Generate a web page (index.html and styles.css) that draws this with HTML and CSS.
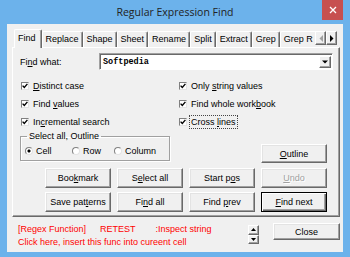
FILE: index.html
```html
<!DOCTYPE html>
<html>
<head>
  <meta charset="utf-8">
  <title>Regular Expression Find</title>
  <link rel="stylesheet" href="styles.css">
</head>
<body>
<div class="window">

  <div class="titlebar">
    <span></span>
    <span class="title">Regular Expression Find</span>
    <span class="close">
      <svg width="8" height="8" viewBox="0 0 8 8"><path d="M1 1L7 7M7 1L1 7" stroke="#fff" stroke-width="1.3"/></svg>
    </span>
  </div>

  <div class="client">

    <div class="tabstrip">
      <div class="tablist">
        <span class="tab active">Find</span>
        <span class="tab">Replace</span>
        <span class="tab">Shape</span>
        <span class="tab">Sheet</span>
        <span class="tab">Rename</span>
        <span class="tab">Split</span>
        <span class="tab">Extract</span>
        <span class="tab">Grep</span>
        <span class="tab last">Grep R</span>
      </div>
      <div class="tabscroll">
        <span class="scrollbtn off"><svg width="4" height="7" viewBox="0 0 4 7"><path d="M4 0L0.5 3.5L4 7Z" fill="#a0a0a0"/></svg></span>
        <span class="scrollbtn"><svg width="4" height="7" viewBox="0 0 4 7"><path d="M0 0L3.5 3.5L0 7Z" fill="#000"/></svg></span>
      </div>
    </div>

    <div class="panel">
      <div class="findrow">
        <span class="findlabel">Fi<u>n</u>d what:</span>
        <div class="combo">
          <span class="combotext">Softpedia</span>
          <span class="dropbtn"><svg width="6" height="4" viewBox="0 0 6 4"><path d="M0 0.5H6L3 3.5Z" fill="#000"/></svg></span>
        </div>
      </div>

      <div class="checks">
        <div class="check"><span class="box"><svg width="6" height="6" viewBox="0 0 6 6"><path d="M0.6 2.6L2.3 4.5L5.4 0.9" fill="none" stroke="#000" stroke-width="1.4"/></svg></span><span><u>D</u>istinct case</span></div>
        <div class="check"><span class="box"><svg width="6" height="6" viewBox="0 0 6 6"><path d="M0.6 2.6L2.3 4.5L5.4 0.9" fill="none" stroke="#000" stroke-width="1.4"/></svg></span><span>Only <u>s</u>tring values</span></div>
        <div class="check"><span class="box"><svg width="6" height="6" viewBox="0 0 6 6"><path d="M0.6 2.6L2.3 4.5L5.4 0.9" fill="none" stroke="#000" stroke-width="1.4"/></svg></span><span>Find <u>v</u>alues</span></div>
        <div class="check"><span class="box"><svg width="6" height="6" viewBox="0 0 6 6"><path d="M0.6 2.6L2.3 4.5L5.4 0.9" fill="none" stroke="#000" stroke-width="1.4"/></svg></span><span>Find whole work<u>b</u>ook</span></div>
        <div class="check"><span class="box"><svg width="6" height="6" viewBox="0 0 6 6"><path d="M0.6 2.6L2.3 4.5L5.4 0.9" fill="none" stroke="#000" stroke-width="1.4"/></svg></span><span>In<u>c</u>remental search</span></div>
        <div class="check"><span class="box"><svg width="6" height="6" viewBox="0 0 6 6"><path d="M0.6 2.6L2.3 4.5L5.4 0.9" fill="none" stroke="#000" stroke-width="1.4"/></svg></span><span class="focus">Cross <u>l</u>ines</span></div>
      </div>

      <div class="middle">
        <fieldset class="group">
          <legend>Select all, Outline</legend>
          <div class="radios">
            <span class="radio on"><span class="dot"></span>Cell</span>
            <span class="radio"><span class="dot"></span>Row</span>
            <span class="radio"><span class="dot"></span>Column</span>
          </div>
        </fieldset>
        <button class="btn outline"><u>O</u>utline</button>
      </div>

      <div class="btngrid">
        <button class="btn">Boo<u>k</u>mark</button>
        <button class="btn">S<u>e</u>lect all</button>
        <button class="btn">Start p<u>o</u>s</button>
        <button class="btn off"><u>U</u>ndo</button>
        <button class="btn">Save pat<u>t</u>erns</button>
        <button class="btn">Fi<u>n</u>d all</button>
        <button class="btn">Find <u>p</u>rev</button>
        <button class="btn default"><u>F</u>ind next</button>
      </div>
    </div>

    <div class="footer">
      <div class="hint">
        <div class="hintline"><span>[Regex Function]</span><span class="retest">RETEST</span><span class="inspect">:Inspect string</span></div>
        <div class="hintline">Click here, insert this func into cureent cell</div>
      </div>
      <div class="spin">
        <span class="spinbtn"><svg width="5" height="3" viewBox="0 0 5 3"><path d="M0 3H5L2.5 0Z" fill="#000"/></svg></span>
        <span class="spinbtn"><svg width="5" height="3" viewBox="0 0 5 3"><path d="M0 0H5L2.5 3Z" fill="#000"/></svg></span>
      </div>
      <button class="btn closebtn">Close</button>
    </div>

  </div>
</div>
</body>
</html>
```

FILE: styles.css
```css
* {
  box-sizing: border-box;
}

body {
  margin: 0;
  font-family: "Liberation Sans", Arial, sans-serif;
  font-size: 9px;
  color: #000;
}

u {
  text-decoration-thickness: 1px;
  text-underline-offset: 1px;
}

.window {
  width: 350px;
  height: 257px;
  background: #6cb2eb;
  display: flex;
  flex-direction: column;
}

/* title bar */
.titlebar {
  height: 24px;
  display: grid;
  grid-template-columns: 1fr auto 1fr;
}

.title {
  font-family: "Open Sans", "Noto Sans", sans-serif;
  font-size: 10.5px;
  line-height: 24px;
  color: #222;
}

.close {
  justify-self: end;
  margin-right: 7px;
  width: 21px;
  height: 20px;
  background: #c75050;
  display: flex;
  align-items: center;
  justify-content: center;
}

/* dialog body */
.client {
  margin: 0 7px;
  height: 228px;
  background: #f0f0f0;
  padding: 5px 3px 0 5px;
  display: flex;
  flex-direction: column;
}

/* tabs */
.tabstrip {
  height: 19px;
  display: flex;
  padding: 0 3px 0 2px;
  position: relative;
  z-index: 1;
}

.tablist {
  flex: 1;
  min-width: 0;
  display: flex;
  align-items: flex-end;
  overflow: hidden;
}

.tab {
  height: 16px;
  margin-bottom: 1px;
  padding: 0 3px;
  line-height: 15px;
  white-space: nowrap;
  border-top: 1px solid #fff;
  border-left: 1px solid #fff;
  border-right: 1px solid #696969;
  box-shadow: inset -1px 0 #a0a0a0;
  border-radius: 2px 2px 0 0;
}

.tab.active {
  height: 19px;
  margin-bottom: 0;
  padding: 0 5px 0 3px;
  line-height: 16px;
  background: #f0f0f0;
}

.tab.last {
  flex: 1;
  border-right: 0;
  box-shadow: none;
}

.tabscroll {
  display: flex;
  margin-top: 2px;
  height: 14px;
}

.scrollbtn {
  width: 11px;
  height: 14px;
  display: flex;
  align-items: center;
  justify-content: center;
  background: #f0f0f0;
  border: 1px solid;
  border-color: #fff #696969 #696969 #fff;
  box-shadow: inset -1px -1px #a0a0a0;
}

.panel {
  margin-top: -1px;
  height: 170px;
  border: 1px solid;
  border-color: #fff #696969 #696969 #fff;
  box-shadow: inset -1px -1px #a0a0a0;
  padding: 5px 6px 4px 7px;
  display: flex;
  flex-direction: column;
}

/* find what */
.findrow {
  height: 17px;
  display: flex;
  align-items: center;
}

.findlabel {
  width: 79px;
}

.combo {
  flex: 1;
  height: 17px;
  background: #fff;
  border: 1px solid;
  border-color: #a0a0a0 #fff #fff #a0a0a0;
  box-shadow: inset 1px 1px #696969;
  display: flex;
  align-items: center;
  padding: 0 1px 0 3px;
}

.combotext {
  flex: 1;
  font-family: "Liberation Mono", "Courier New", monospace;
  font-weight: bold;
  font-size: 8.5px;
}

.dropbtn {
  width: 12px;
  height: 12px;
  display: flex;
  align-items: center;
  justify-content: center;
  background: #f0f0f0;
  border: 1px solid;
  border-color: #fff #696969 #696969 #fff;
  box-shadow: inset -1px -1px #a0a0a0;
}

/* check boxes */
.checks {
  margin-top: 7px;
  display: grid;
  grid-template-columns: 158px 1fr;
  grid-auto-rows: 18px;
}

.check {
  display: flex;
  align-items: center;
  gap: 4px;
  padding-left: 1px;
}

.box {
  width: 8px;
  height: 8px;
  background: #fff;
  border: 1px solid;
  border-color: #808080 #e3e3e3 #e3e3e3 #808080;
  display: flex;
}

.focus {
  outline: 1px dotted #444;
  outline-offset: 1px;
}

/* group box and radios */
.middle {
  display: flex;
  justify-content: space-between;
  align-items: flex-start;
}

.group {
  width: 150px;
  margin: 0;
  padding: 0 4px 0;
  border: 1px solid #a0a0a0;
  box-shadow: inset 1px 1px #fff, 1px 1px #fff;
}

.group legend {
  margin-left: 2px;
  padding: 0 2px;
  line-height: 11px;
}

.radios {
  height: 18px;
  display: grid;
  grid-template-columns: 47px 42px auto;
  align-items: center;
}

.radio {
  display: flex;
  align-items: center;
  gap: 3px;
}

.dot {
  width: 8px;
  height: 8px;
  border-radius: 50%;
  background: #fff;
  border: 1px solid;
  border-color: #808080 #e3e3e3 #e3e3e3 #808080;
}

.radio.on .dot {
  background: radial-gradient(circle, #000 0 1.3px, #fff 1.8px);
}

/* buttons */
.btn {
  font: inherit;
  color: #000;
  background: #f0f0f0;
  border: 1px solid;
  border-color: #fff #696969 #696969 #fff;
  box-shadow: inset -1px -1px #a0a0a0, inset 1px 1px #e3e3e3;
  padding: 0;
  margin: 0;
}

.btn.off {
  color: #a0a0a0;
  text-shadow: 1px 1px #fff;
}

.btn.default {
  border-color: #000;
  box-shadow: inset 1px 1px #fff, inset -1px -1px #696969, inset -2px -2px #a0a0a0;
}

.outline {
  margin-top: 13px;
  margin-right: 6px;
  width: 66px;
  height: 19px;
}

.btngrid {
  margin-top: 5px;
  margin-left: 25px;
  display: grid;
  grid-template-columns: repeat(4, 66px);
  grid-auto-rows: 20px;
  gap: 4px 6px;
}

/* footer */
.footer {
  flex: 1;
  display: flex;
  padding-left: 6px;
}

.hint {
  flex: 1;
  margin-top: 6px;
  color: #f00;
  line-height: 12.5px;
}

.retest {
  margin-left: 14px;
}

.inspect {
  margin-left: 20px;
}

.spin {
  margin-top: 8px;
  width: 11px;
  height: 19px;
  display: flex;
  flex-direction: column;
}

.spinbtn {
  flex: 1;
  display: flex;
  align-items: center;
  justify-content: center;
  background: #f0f0f0;
  border: 1px solid;
  border-color: #fff #696969 #696969 #fff;
  box-shadow: inset -1px -1px #a0a0a0;
}

.closebtn {
  margin-top: 6px;
  margin-left: 14px;
  width: 67px;
  height: 17px;
}
```
